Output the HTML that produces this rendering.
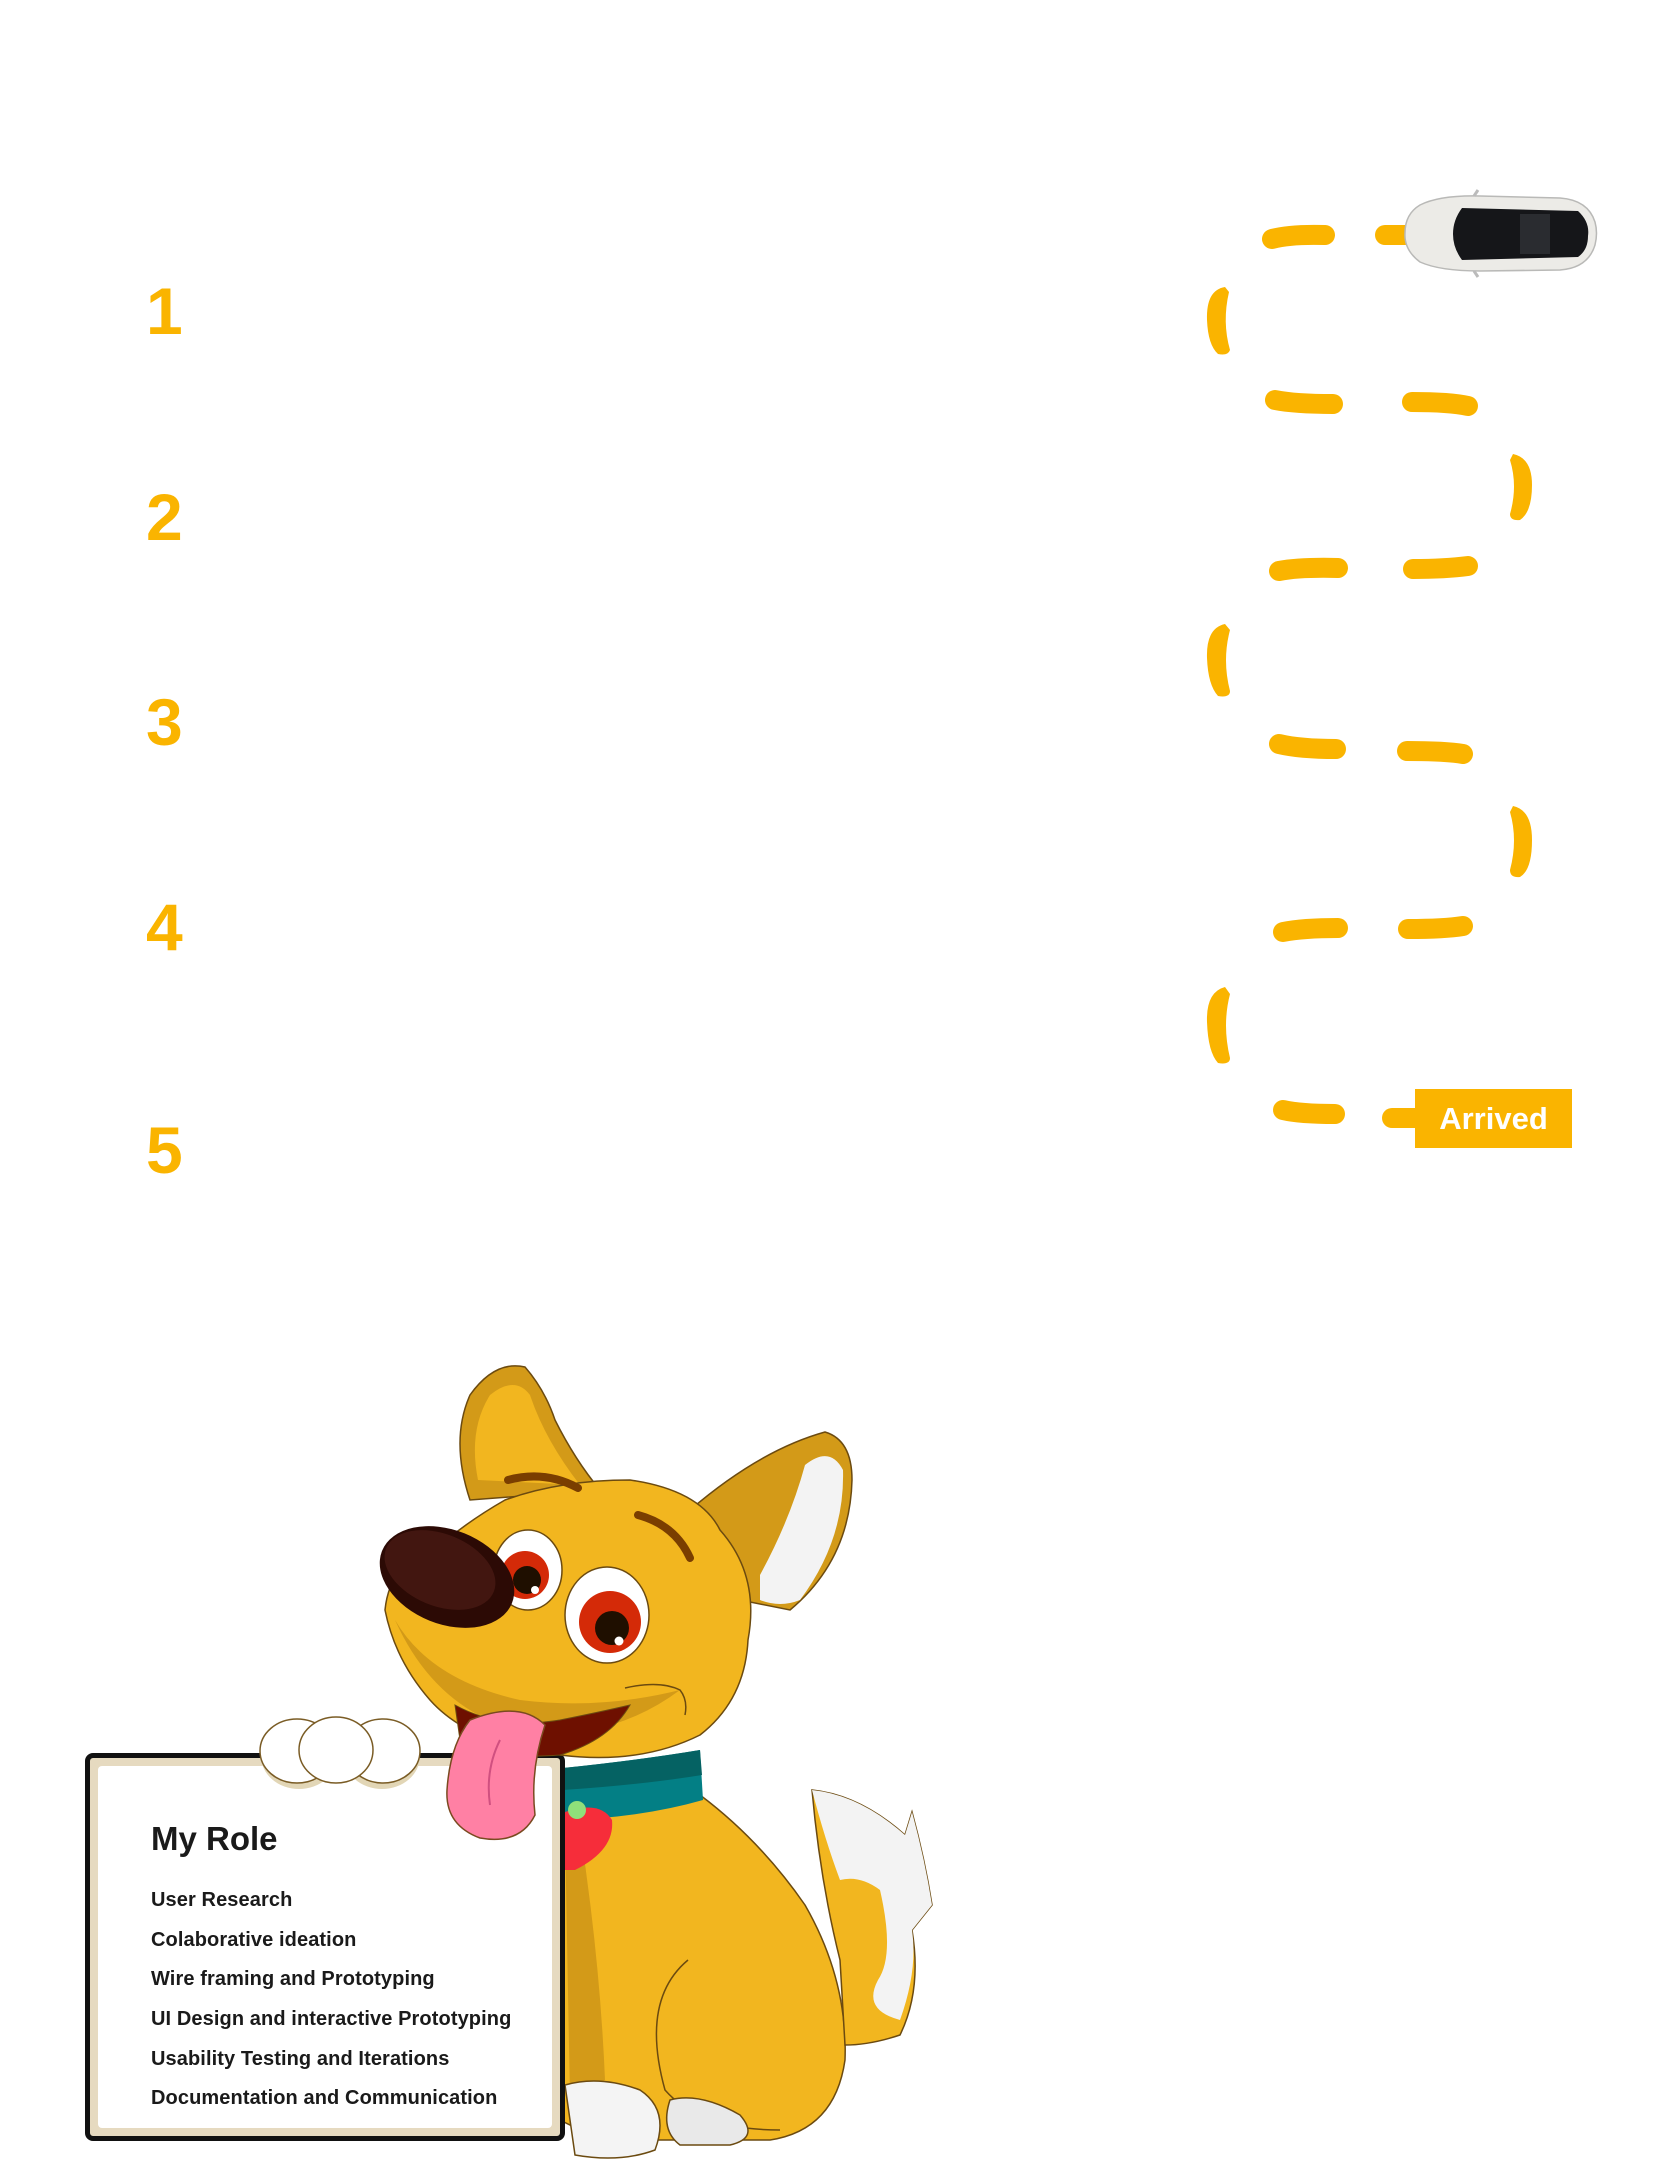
<!DOCTYPE html>
<html><head><meta charset="utf-8"><style>
html,body{margin:0;padding:0;background:#fff;}
body{width:1671px;height:2163px;position:relative;overflow:hidden;font-family:"Liberation Sans",sans-serif;}
.n{position:absolute;left:146px;font-weight:bold;font-size:66px;color:#FAB400;line-height:1;}
svg{position:absolute;left:0;top:0;}
.card{position:absolute;left:85px;top:1753px;width:470px;height:378px;border:5px solid #111;border-radius:8px;background:#e6dac0;}
.card .in{position:absolute;left:8px;top:8px;right:8px;bottom:8px;background:#fff;border-radius:4px;}
.t{position:absolute;left:151px;color:#1a1a1a;}
.ttl{font-size:33px;font-weight:bold;top:1820px;}
.it{font-size:20px;font-weight:bold;letter-spacing:0.1px;}
.arr{position:absolute;left:1415px;top:1089px;width:157px;height:59px;background:#FAB400;color:#fff;font-weight:bold;font-size:31px;line-height:59px;text-align:center;}
</style></head><body>
<div class="n" style="top:278px">1</div>
<div class="n" style="top:484px">2</div>
<div class="n" style="top:689px">3</div>
<div class="n" style="top:894px">4</div>
<div class="n" style="top:1117px">5</div>

<svg width="1671" height="2163" viewBox="0 0 1671 2163">
<g stroke="#FAB400" stroke-width="20" stroke-linecap="round" fill="none">
<path d="M1272 239 Q1290 234 1325 235"/>
<path d="M1275 400 Q1295 404 1333 404"/>
<path d="M1412 402 Q1450 402 1468 406"/>
<path d="M1279 571 Q1300 567 1338 568"/>
<path d="M1413 569 Q1445 569 1468 566"/>
<path d="M1279 744 Q1300 749 1336 749"/>
<path d="M1407 751 Q1445 751 1463 754"/>
<path d="M1283 932 Q1303 928 1338 928"/>
<path d="M1408 929 Q1445 929 1463 926"/>
<path d="M1283 1110 Q1300 1114 1335 1114"/>
<path d="M1392 1118 L1415 1118"/>
<path d="M1385 235 L1405 235"/>
</g>
<g fill="#FAB400">
<path d="M1225 287 Q1206 290 1207 320 Q1208 345 1218 354 Q1228 356 1230 350 Q1222 322 1229 292 Z"/>
<path d="M1225 624 Q1206 628 1207 658 Q1208 685 1218 696 Q1230 698 1230 691 Q1222 660 1230 630 Z"/>
<path d="M1225 987 Q1206 992 1207 1022 Q1208 1052 1218 1063 Q1230 1065 1230 1058 Q1222 1025 1230 994 Z"/>
<path d="M1513 454 Q1532 458 1532 485 Q1532 512 1520 520 Q1510 521 1510 514 Q1518 486 1510 460 Z"/>
<path d="M1513 806 Q1532 810 1532 840 Q1532 870 1520 877 Q1510 878 1510 870 Q1518 840 1510 812 Z"/>
</g>
<!-- car -->
<path d="M1420 205 Q1440 195 1480 196 L1560 198 Q1588 200 1595 222 Q1598 233 1595 245 Q1588 268 1560 270 L1480 271 Q1440 271 1420 262 Q1404 250 1405 233 Q1405 214 1420 205 Z" fill="#ecebe7" stroke="#b9b9b7" stroke-width="1.5"/>
<path d="M1462 208 L1578 211 Q1590 222 1588 236 Q1588 250 1578 257 L1462 260 Q1453 248 1453 234 Q1453 220 1462 208 Z" fill="#151619"/>
<rect x="1520" y="214" width="30" height="40" fill="#2a2c30"/>
<path d="M1474 196 L1478 190 M1474 271 L1478 277" stroke="#bbb" stroke-width="3"/>

<!-- dog body -->
<path d="M560 1800 L700 1795 Q760 1840 805 1905 Q848 1980 845 2060 Q835 2130 770 2140 L600 2140 L560 2120 Z" fill="#F2B61F" stroke="#6b4a10" stroke-width="1.5"/>
<path d="M580 1830 Q600 1960 605 2080 L570 2100 L565 1830 Z" fill="#D39A18"/>
<path d="M688 1960 Q640 2000 665 2090 Q700 2130 780 2130" fill="none" stroke="#6b4a10" stroke-width="1.5"/>
<!-- tail -->
<path d="M840 1960 Q820 1880 812 1790 Q860 1795 905 1835 L912 1812 Q925 1860 932 1905 L912 1930 Q922 1990 900 2035 Q870 2045 845 2045 Z" fill="#F2B61F" stroke="#6b4a10" stroke-width="1.5"/>
<path d="M812 1790 Q860 1795 905 1835 L912 1812 Q925 1860 932 1905 L912 1930 Q918 1970 900 2020 Q862 2010 878 1980 Q895 1955 880 1890 Q860 1875 840 1880 Q825 1840 812 1790 Z" fill="#f3f3f3"/>
<!-- feet -->
<path d="M565 2085 Q600 2075 640 2090 Q670 2110 655 2150 Q620 2163 575 2155 Z" fill="#f4f4f4" stroke="#6b4a10" stroke-width="1.5"/>
<path d="M670 2100 Q700 2092 740 2115 Q760 2138 730 2145 L680 2145 Q660 2130 670 2100 Z" fill="#e9e9e9" stroke="#6b4a10" stroke-width="1.5"/>
<!-- collar -->
<path d="M563 1768 Q640 1760 700 1750 L703 1800 Q640 1818 563 1820 Z" fill="#037f85"/>
<path d="M563 1768 Q640 1760 700 1750 L702 1775 Q640 1785 563 1790 Z" fill="#056263"/>
<path d="M565 1812 Q600 1800 612 1820 Q615 1850 575 1870 L565 1870 Z" fill="#f62d3a"/>
<circle cx="577" cy="1810" r="9" fill="#8fe07a"/>
</svg>

<div class="card"><div class="in"></div></div>

<svg width="1671" height="2163" viewBox="0 0 1671 2163">
<g stroke="#7a5c25" stroke-width="1.5">
<ellipse cx="299" cy="1756" rx="38" ry="33" fill="#e2d6b6" stroke="none"/>
<ellipse cx="382" cy="1756" rx="38" ry="33" fill="#e2d6b6" stroke="none"/>
<ellipse cx="297" cy="1751" rx="37" ry="32" fill="#fff"/>
<ellipse cx="383" cy="1751" rx="37" ry="32" fill="#fff"/>
<ellipse cx="336" cy="1750" rx="37" ry="33" fill="#fff"/>
</g>
<path d="M470 1500 Q450 1440 470 1395 Q495 1360 525 1367 Q545 1390 555 1420 Q575 1460 600 1490 Z" fill="#D39A18" stroke="#6b4a10" stroke-width="1.5"/>
<path d="M478 1480 Q468 1430 490 1395 Q515 1375 530 1395 Q545 1440 580 1485 Z" fill="#F2B61F"/>
<path d="M690 1510 Q760 1450 825 1432 Q852 1440 852 1480 Q850 1560 790 1610 L740 1600 Z" fill="#D39A18" stroke="#6b4a10" stroke-width="1.5"/>
<path d="M760 1575 Q790 1520 805 1465 Q830 1445 843 1470 Q845 1540 800 1600 Q780 1608 760 1600 Z" fill="#f3f3f3"/>
<path d="M505 1500 Q560 1480 630 1480 Q700 1490 720 1530 Q760 1575 748 1640 Q745 1700 700 1735 Q640 1765 560 1755 Q470 1745 430 1700 Q395 1660 385 1610 Q390 1560 440 1545 Q470 1520 505 1500 Z" fill="#F2B61F" stroke="#6b4a10" stroke-width="1.5"/>
<path d="M395 1620 Q430 1680 520 1700 Q600 1710 680 1690 Q620 1735 540 1735 Q440 1720 395 1620 Z" fill="#D39A18"/>
<path d="M455 1705 Q500 1730 560 1720 Q600 1712 630 1705 Q610 1740 560 1755 Q490 1760 460 1740 Z" fill="#6e1000" stroke="#6b4a10" stroke-width="1"/>
<path d="M470 1720 Q520 1700 545 1725 Q530 1770 535 1815 Q520 1845 480 1838 Q445 1825 447 1790 Q450 1745 470 1720 Z" fill="#ff80a4" stroke="#7a4a20" stroke-width="1.5"/>
<path d="M500 1740 Q485 1770 490 1805" fill="none" stroke="#d05080" stroke-width="2"/>
<path d="M508 1480 Q545 1470 578 1488" fill="none" stroke="#7a3e00" stroke-width="8" stroke-linecap="round"/>
<path d="M638 1515 Q675 1525 690 1558" fill="none" stroke="#7a3e00" stroke-width="8" stroke-linecap="round"/>
<ellipse cx="528" cy="1570" rx="34" ry="40" fill="#fff" stroke="#6b4a10" stroke-width="1.5"/>
<circle cx="525" cy="1575" r="24" fill="#d42a08"/>
<circle cx="527" cy="1580" r="14" fill="#1f0f00"/>
<circle cx="535" cy="1590" r="4" fill="#fff"/>
<ellipse cx="607" cy="1615" rx="42" ry="48" fill="#fff" stroke="#6b4a10" stroke-width="1.5"/>
<circle cx="610" cy="1622" r="31" fill="#d42a08"/>
<circle cx="612" cy="1628" r="17" fill="#1f0f00"/>
<circle cx="619" cy="1641" r="4.5" fill="#fff"/>
<ellipse cx="447" cy="1577" rx="70" ry="47" transform="rotate(22 447 1577)" fill="#2c0a05"/>
<ellipse cx="440" cy="1570" rx="58" ry="36" transform="rotate(22 440 1570)" fill="#421610"/>
<path d="M625 1688 Q660 1680 680 1690 Q688 1700 685 1715" fill="none" stroke="#6b4a10" stroke-width="1.5"/>
</svg>

<div class="t ttl">My Role</div>
<div class="t it" style="top:1889px">User Research</div>
<div class="t it" style="top:1929px">Colaborative ideation</div>
<div class="t it" style="top:1968px">Wire framing and Prototyping</div>
<div class="t it" style="top:2008px">UI Design and interactive Prototyping</div>
<div class="t it" style="top:2048px">Usability Testing and Iterations</div>
<div class="t it" style="top:2087px">Documentation and Communication</div>

<div class="arr">Arrived</div>
</body></html>
